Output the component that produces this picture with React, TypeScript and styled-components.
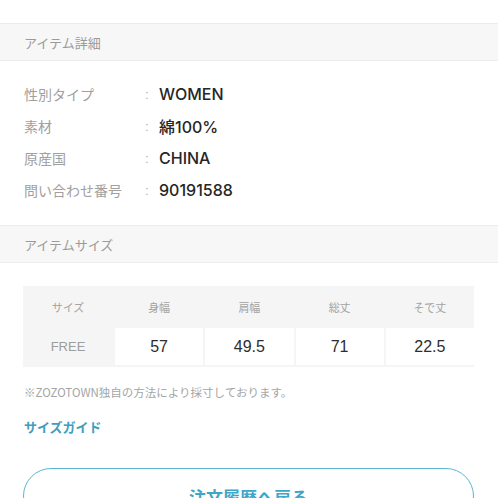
import React from "react";
import styled, { createGlobalStyle } from "styled-components";

const GlobalStyle = createGlobalStyle`
    body {
        margin: 0;
        background: #ffffff;
        font-family: "Liberation Sans", "Noto Sans CJK JP", sans-serif;
    }
`;

const Page = styled.div`
    display: flex;
    flex-direction: column;
    width: 498px;
    height: 498px;
    overflow: hidden;
    padding-top: 23px;
    box-sizing: border-box;

    & > * {
        flex-shrink: 0;
    }
`;

const SectionHeader = styled.div<{ $gap?: number }>`
    display: flex;
    align-items: center;
    height: 36px;
    padding: 0 24px;
    margin-top: ${(p) => p.$gap ?? 0}px;
    background: #f7f7f7;
    border-top: 1px solid #ebebeb;
    border-bottom: 1px solid #ededed;
    font-family: "Noto Sans CJK JP", sans-serif;
    font-size: 13px;
    color: #9a9a9a;
`;

const DetailList = styled.div`
    display: flex;
    flex-direction: column;
    padding: 17px 24px 0;
`;

const DetailRow = styled.div`
    display: flex;
    align-items: center;
    height: 32px;
`;

const Label = styled.span`
    width: 121px;
    font-family: "Noto Sans CJK JP", sans-serif;
    font-size: 14px;
    color: #a0a0a0;
`;

const Colon = styled.span`
    width: 14px;
    font-size: 13px;
    color: #b0b0b0;
`;

const Value = styled.span`
    font-family: Inter, "Noto Sans CJK JP", sans-serif;
    font-size: 16px;
    font-weight: 500;
    color: #262626;
`;

const SizeTable = styled.div`
    display: grid;
    grid-template-columns: 90px repeat(4, 1fr);
    column-gap: 2px;
    margin: 23px 24px 0 23px;
    padding-bottom: 2px;
    background: #f5f5f5;
`;

const HeadCell = styled.div`
    display: flex;
    align-items: center;
    justify-content: center;
    height: 42px;
    font-family: "Noto Sans CJK JP", sans-serif;
    font-size: 11px;
    color: #a3a3a3;
`;

const DataCell = styled.div<{ $label?: boolean }>`
    display: flex;
    align-items: center;
    justify-content: center;
    height: 37px;
    background: ${(p) => (p.$label ? "transparent" : "#ffffff")};
    font-family: "Liberation Sans", sans-serif;
    font-size: ${(p) => (p.$label ? "13px" : "16px")};
    color: ${(p) => (p.$label ? "#9d9d9d" : "#2d2d2d")};
`;

const Note = styled.p`
    margin: 17px 24px 0;
    font-family: "Noto Sans CJK JP", sans-serif;
    font-size: 11.5px;
    color: #a5a5a5;
`;

const GuideLink = styled.a`
    margin: 17px 24px 0;
    font-family: "Noto Sans CJK JP", sans-serif;
    font-size: 13px;
    font-weight: bold;
    color: #3d9ec0;
    text-decoration: none;
`;

const BackButton = styled.button`
    display: flex;
    justify-content: center;
    align-items: flex-start;
    margin: 32px 24px 0 23px;
    height: 56px;
    padding-top: 15px;
    background: #ffffff;
    border: 1.5px solid #5ab6d2;
    border-radius: 30px;
    font-family: "Noto Sans CJK JP", sans-serif;
    font-size: 17px;
    font-weight: bold;
    color: #3ea6c8;
`;

const details = [
    { label: "性別タイプ", value: "WOMEN" },
    { label: "素材", value: "綿100%" },
    { label: "原産国", value: "CHINA" },
    { label: "問い合わせ番号", value: "90191588" },
];

const heads = ["サイズ", "身幅", "肩幅", "総丈", "そで丈"];
const sizes = ["FREE", "57", "49.5", "71", "22.5"];

const App = () => {
    return (
        <Page>
            <GlobalStyle />
            <SectionHeader>アイテム詳細</SectionHeader>
            <DetailList>
                {details.map((d) => (
                    <DetailRow key={d.label}>
                        <Label>{d.label}</Label>
                        <Colon>:</Colon>
                        <Value>{d.value}</Value>
                    </DetailRow>
                ))}
            </DetailList>
            <SectionHeader $gap={19}>アイテムサイズ</SectionHeader>
            <SizeTable>
                {heads.map((h) => (
                    <HeadCell key={h}>{h}</HeadCell>
                ))}
                {sizes.map((s, i) => (
                    <DataCell key={s} $label={i === 0}>
                        {s}
                    </DataCell>
                ))}
            </SizeTable>
            <Note>※ZOZOTOWN独自の方法により採寸しております。</Note>
            <GuideLink href="#">サイズガイド</GuideLink>
            <BackButton>注文履歴へ戻る</BackButton>
        </Page>
    );
};

export default App;
